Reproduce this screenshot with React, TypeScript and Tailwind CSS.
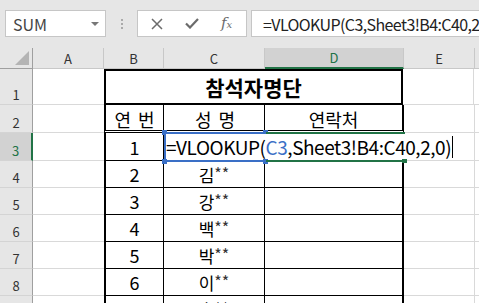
import React from "react";

const FONT = "font-['Noto_Sans_CJK_KR',sans-serif]";

const GRID = "border-[#d9d9d9]";

const NAMES = [
  { no: "2", name: "김" },
  { no: "3", name: "강" },
  { no: "4", name: "백" },
  { no: "5", name: "박" },
  { no: "6", name: "이" },
  { no: "7", name: "홍" },
];

function RowHead({ label, h, active }: { label: string; h: string; active?: boolean }) {
  return (
    <div
      className={`${h} w-[33px] shrink-0 flex items-end justify-center pb-[3px] text-[13px] leading-none border-b border-[#d4d4d4] ${
        active
          ? "bg-[#d2d2d2] text-[#217346] border-r-2 border-r-[#217346]"
          : "bg-[#e6e6e6] text-[#333] border-r border-r-[#9f9f9f]"
      }`}
    >
      {label}
    </div>
  );
}

function Toolbar() {
  return (
    <div className="h-[48px] bg-[#e6e6e6] flex items-start pt-[10px] pl-[5px]">
      {/* 이름 상자 */}
      <div className="w-[101px] h-[27px] shrink-0 bg-white border border-[#c6c6c6] flex items-center justify-between pl-[7px] pr-[6px]">
        <span className="text-[16px] text-[#444] leading-none">SUM</span>
        <span className="w-0 h-0 border-l-[4px] border-r-[4px] border-t-[4px] border-l-transparent border-r-transparent border-t-[#777]" />
      </div>

      {/* 구분점 */}
      <div className="w-[31px] h-[27px] shrink-0 flex flex-col items-center justify-center gap-[2px]">
        <span className="w-[2px] h-[2px] bg-[#aaa]" />
        <span className="w-[2px] h-[2px] bg-[#aaa]" />
        <span className="w-[2px] h-[2px] bg-[#aaa]" />
      </div>

      {/* 취소 / 입력 / 함수 */}
      <div className="w-[110px] h-[27px] shrink-0 bg-white border border-[#c6c6c6] flex items-center pl-[13px] gap-[22px]">
        <svg width="12" height="12" viewBox="0 0 12 12" fill="none" stroke="#6b6b6b" strokeWidth="1.5">
          <path d="M1 1l10 10M11 1L1 11" />
        </svg>
        <svg width="14" height="11" viewBox="0 0 14 11" fill="none" stroke="#6b6b6b" strokeWidth="2.2">
          <path d="M1 5.5l4 4L13 1" />
        </svg>
        <span className="font-['DejaVu_Serif',serif] italic text-[15px] text-[#6b6b6b] leading-none">
          f<span className="text-[10px]">x</span>
        </span>
      </div>

      {/* 수식 입력줄 */}
      <div className="ml-[4px] flex-1 h-[27px] bg-white border border-r-0 border-[#c6c6c6] flex items-center pl-[11px] overflow-hidden whitespace-nowrap">
        <span className="text-[16px] text-[#222] leading-none tracking-[-0.6px]">=VLOOKUP(C3,Sheet3!B4:C40,2,0)</span>
      </div>
    </div>
  );
}

function ColumnHeader() {
  const cols = [
    { l: "A", w: "w-[71px]" },
    { l: "B", w: "w-[60px]" },
    { l: "C", w: "w-[101px]" },
  ];
  return (
    <div className="h-[21px] flex text-[13px] text-[#333] leading-none">
      <div className="w-[33px] shrink-0 bg-[#e6e6e6] border-r border-b border-[#9f9f9f] flex items-end justify-end pr-[3px] pb-[3px]">
        <svg width="14" height="14" viewBox="0 0 14 14">
          <path d="M14 0V14H0Z" fill="#b4b4b4" />
        </svg>
      </div>
      {cols.map((c) => (
        <div key={c.l} className={`${c.w} shrink-0 bg-[#e6e6e6] border-r border-b border-[#c8c8c8] flex items-center justify-center`}>
          {c.l}
        </div>
      ))}
      <div className="w-[139px] shrink-0 bg-[#d2d2d2] text-[#217346] border-r border-[#c8c8c8] border-b-2 border-b-[#217346] flex items-center justify-center">
        D
      </div>
      <div className="w-[71px] shrink-0 bg-[#e6e6e6] border-r border-b border-[#c8c8c8] flex items-center justify-center">
        E
      </div>
      <div className="flex-1 bg-[#e6e6e6] border-b border-[#c8c8c8]" />
    </div>
  );
}

export default function App() {
  return (
    <div className={`w-[479px] h-[303px] overflow-hidden bg-white ${FONT}`}>
      <Toolbar />
      <ColumnHeader />

      {/* 1행: 제목 */}
      <div className="h-[36px] flex">
        <RowHead label="1" h="h-[36px]" />
        <div className={`w-[71px] shrink-0 border-b ${GRID}`} />
        <div className="w-[299px] shrink-0 border-2 border-black flex items-center justify-center text-[21px] font-bold text-black leading-none pt-[1px]">
          참석자명단
        </div>
        <div className={`w-[71px] shrink-0 border-r border-b ${GRID}`} />
        <div className={`flex-1 border-b ${GRID}`} />
      </div>

      {/* 2행: 머리글 */}
      <div className="h-[28px] flex">
        <RowHead label="2" h="h-[28px]" />
        <div className={`w-[71px] shrink-0 border-b ${GRID}`} />
        <div className="w-[60px] shrink-0 border-l-2 border-r border-b-[3px] border-double border-black flex items-end justify-center gap-[7px] pb-[2px] text-[18px] leading-none text-black">
          <span>연</span>
          <span>번</span>
        </div>
        <div className="w-[101px] shrink-0 border-r border-b-[3px] border-double border-black flex items-end justify-center gap-[7px] pb-[2px] pl-[2px] text-[18px] leading-none text-black">
          <span>성</span>
          <span>명</span>
        </div>
        <div className="w-[139px] shrink-0 border-r-2 border-b-[3px] border-double border-black flex items-end justify-center pb-[2px] text-[18px] leading-none text-black">
          연락처
        </div>
        <div className={`w-[71px] shrink-0 border-r border-b ${GRID}`} />
        <div className={`flex-1 border-b ${GRID}`} />
      </div>

      {/* 3행: 편집 중 */}
      <div className="h-[28px] flex relative">
        <RowHead label="3" h="h-[28px]" active />
        <div className={`w-[71px] shrink-0 border-b ${GRID}`} />
        <div className="w-[60px] shrink-0 border-l-2 border-r border-b border-black flex items-center justify-center text-[18px] leading-none text-black">
          1
        </div>
        <div className="w-[101px] shrink-0 border-r border-b border-black" />
        <div className="w-[139px] shrink-0 border-r-2 border-b border-black" />
        <div className={`w-[71px] shrink-0 border-r border-b ${GRID}`} />
        <div className={`flex-1 border-b ${GRID}`} />

        {/* 참조 셀 C3 (파랑) */}
        <div className="absolute left-[164px] top-[-1px] w-[102px] h-[30px] border-2 border-[#3a6fc6]" />
        <span className="absolute left-[162px] top-[-3px] w-[5px] h-[5px] bg-[#3a6fc6]" />
        <span className="absolute left-[263px] top-[-3px] w-[5px] h-[5px] bg-[#3a6fc6]" />
        <span className="absolute left-[162px] top-[26px] w-[5px] h-[5px] bg-[#3a6fc6]" />
        <span className="absolute left-[263px] top-[26px] w-[5px] h-[5px] bg-[#3a6fc6]" />

        {/* 활성 셀 D3 (초록) */}
        <div className="absolute left-[266px] top-[-1px] w-[139px] h-[2px] bg-[#217346]" />
        <div className="absolute left-[266px] top-[27px] w-[139px] h-[2px] bg-[#217346]" />
        <span className="absolute left-[402px] top-[25px] w-[5px] h-[5px] bg-[#217346]" />

        {/* 편집 텍스트 */}
        <div className="absolute left-[166px] top-[1px] h-[25px] bg-white flex items-center whitespace-nowrap text-[19px] tracking-[-0.45px] leading-none text-black pr-[1px]">
          <span>=VLOOKUP(</span>
          <span className="text-[#3a6fc6]">C3</span>
          <span>,Sheet3!B4:C40,2,0)</span>
          <span className="ml-[1px] w-[1px] h-[22px] bg-black" />
        </div>
      </div>

      {/* 4행 이후 */}
      {NAMES.map((r, i) => (
        <div key={r.no} className="h-[27px] flex">
          <RowHead label={String(i + 4)} h="h-[27px]" />
          <div className={`w-[71px] shrink-0 border-b ${GRID}`} />
          <div className="w-[60px] shrink-0 border-l-2 border-r border-b border-black flex items-center justify-center text-[18px] leading-none text-black">
            {r.no}
          </div>
          <div className="w-[101px] shrink-0 border-r border-b border-black flex items-center justify-center text-[17px] leading-none text-black">
            {r.name}
            <span className="text-[16px] text-[#333] pb-[2px]">**</span>
          </div>
          <div className="w-[139px] shrink-0 border-r-2 border-b border-black" />
          <div className={`w-[71px] shrink-0 border-r border-b ${GRID}`} />
          <div className={`flex-1 border-b ${GRID}`} />
        </div>
      ))}
    </div>
  );
}
